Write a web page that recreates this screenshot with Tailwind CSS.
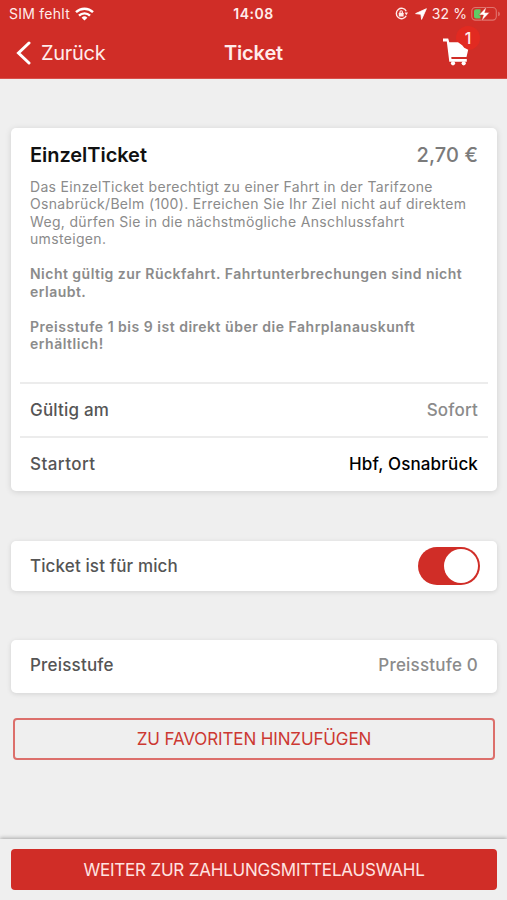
<!DOCTYPE html>
<html lang="de">
<head>
    <meta charset="UTF-8">
    <meta name="viewport" content="width=device-width, initial-scale=1.0">
    <title>Ticket</title>
    <script src="https://cdn.jsdelivr.net/npm/@tailwindcss/browser@4"></script>
</head>
<body class="bg-[#efefef] font-['Inter','Liberation_Sans',sans-serif]">
    <div class="flex flex-col h-[900px] overflow-hidden">
        <!-- Header -->
        <header class="h-[79px] shrink-0 bg-[#d02d27] text-[#ffeceb] border-b border-[#d8504b]">
            <!-- Status bar -->
            <div class="grid grid-cols-3 items-center h-[27px] text-[14px] leading-[27px]">
                <div class="flex items-center pl-[9px] gap-[5px] whitespace-nowrap">
                    <span class="tracking-[0.25px]">SIM fehlt</span>
                    <svg class="w-[19px] h-[14px]" viewBox="0 0 19 14" fill="none" stroke="#fff" stroke-width="2.4">
                        <path d="M1 5.2a12.2 12.2 0 0 1 17 0"/>
                        <path d="M4 8.6a7.8 7.8 0 0 1 11 0"/>
                        <path d="M9.5 13.5 6.6 10.7a4.2 4.2 0 0 1 5.8 0z" fill="#fff" stroke="none"/>
                    </svg>
                </div>
                <span class="text-center font-semibold tracking-[0.5px]">14:08</span>
                <div class="flex items-center justify-end pr-[6px] whitespace-nowrap">
                    <svg class="w-[13px] h-[13px] mr-[7px]" viewBox="0 0 13 13" fill="none" stroke="#ffeceb" stroke-width="1.4">
                        <path d="M11.2 4.2A5.2 5.2 0 1 0 11.2 8.8"/>
                        <path d="M9.6 5.4h3.4l-1.7 2.8z" fill="#ffeceb" stroke="none"/>
                        <rect x="3.8" y="5.7" width="4.8" height="3.7" rx=".5" fill="#ffeceb" stroke="none"/>
                        <path d="M5 6V4.9a1.2 1.2 0 0 1 2.4 0V6" stroke-width="1.1"/>
                    </svg>
                    <svg class="w-[12px] h-[12px] mr-[5px]" viewBox="0 0 12 12" fill="#fff" stroke="#fff" stroke-width=".8" stroke-linejoin="round">
                        <path d="M11.4.7.6 5.6l5.3.7.7 5.1z"/>
                    </svg>
                    <span class="tracking-[0.1px] mr-[4px]">32 %</span>
                    <svg class="w-[30px] h-[16px]" viewBox="0 0 30 16">
                        <rect x=".8" y="1.5" width="24.5" height="12.6" rx="3.6" fill="none" stroke="#e0746f" stroke-width="1.1"/>
                        <path d="M27.2 5.6v4.6q1.7-.6 1.7-2.3t-1.7-2.3z" fill="#e0746f"/>
                        <path d="M5 3.2h4.5v9.2H5a2 2 0 0 1-2-2V5.2a2 2 0 0 1 2-2z" fill="#5fcb65"/>
                        <path d="M15.6.8 7.8 9h4.6l-2 6.2L18.6 6.6h-4.8z" fill="#fff" stroke="#d02d27" stroke-width=".5"/>
                    </svg>
                </div>
            </div>
            <!-- Navigation bar -->
            <div class="grid grid-cols-3 items-center h-[51px] text-[20px] leading-[50px]">
                <div class="flex items-center pl-[16px] gap-[10px]">
                    <svg class="w-[15px] h-[24px]" viewBox="0 0 15 24" fill="none" stroke="#fff" stroke-width="3" stroke-linecap="round">
                        <path d="M13 2 2.5 12 13 22"/>
                    </svg>
                    <span class="tracking-[-0.3px]">Zurück</span>
                </div>
                <span class="text-center font-semibold tracking-[-0.15px]">Ticket</span>
                <div class="flex justify-end pr-[26px]">
                    <div class="relative w-[39px] h-[40px]">
                        <span class="absolute left-[14px] -top-[7px] w-[24px] h-[24px] rounded-full bg-[#e22a21]"></span>
                        <svg class="absolute left-[1px] top-[5px] w-[26px] h-[28px]" viewBox="0 0 26 28" fill="#fff">
                            <path d="M0 .4h5.2l1.1 3.8H15l4.2 3 2 2.600 4 1.900-1.700 7.300H8.300l.2 2h15.300v2.800H6.300L3.800 3.400H0z"/>
                            <circle cx="10" cy="25.300" r="2.100"/>
                            <circle cx="20.700" cy="25.300" r="2.100"/>
                        </svg>
                        <span class="absolute left-[14px] -top-[7px] w-[24px] text-center text-[16px] leading-[24px] font-medium">1</span>
                    </div>
                </div>
            </div>
        </header>

        <main class="grow px-[11px] pt-[49px] text-[17px] font-medium">
            <!-- Ticket details -->
            <section class="w-[486px] h-[363px] bg-white rounded-[5px] shadow-[0_1px_6px_rgba(0,0,0,0.13)] px-[9px]">
                <div class="h-[254px] px-[10px] pt-[13px]">
                    <div class="flex justify-between text-[20px] leading-[28px]">
                        <h1 class="font-semibold text-[#111] tracking-[-0.05px]">EinzelTicket</h1>
                        <span class="text-[#7b7b7b] tracking-[0.1px]">2,70 €</span>
                    </div>
                    <div class="mt-[9px] text-[14px] leading-[17.45px] text-[#8b8b8b] whitespace-nowrap">
                        <p class="font-normal tracking-[0.33px]">Das EinzelTicket berechtigt zu einer Fahrt in der Tarifzone<br>Osnabrück/Belm (100). Erreichen Sie Ihr Ziel nicht auf direktem<br>Weg, dürfen Sie in die nächstmögliche Anschlussfahrt<br>umsteigen.</p>
                        <p class="mt-[17.45px] font-semibold tracking-[0.48px]">Nicht gültig zur Rückfahrt. Fahrtunterbrechungen sind nicht<br>erlaubt.</p>
                        <p class="mt-[17.45px] font-semibold tracking-[0.51px]">Preisstufe 1 bis 9 ist direkt über die Fahrplanauskunft<br>erhältlich!</p>
                    </div>
                </div>
                <div class="flex items-center justify-between h-[54px] pt-[1px] px-[10px] border-t-2 border-[#ececec]">
                    <span class="text-[#555] tracking-[0.2px]">Gültig am</span>
                    <span class="text-[#8b8b8b] tracking-[0.2px]">Sofort</span>
                </div>
                <div class="flex items-center justify-between h-[54px] pt-[1px] px-[10px] border-t-2 border-[#ececec]">
                    <span class="text-[#555] tracking-[0.45px]">Startort</span>
                    <span class="text-[#000] tracking-[0.15px]">Hbf, Osnabrück</span>
                </div>
            </section>

            <!-- Own ticket switch -->
            <section class="flex items-center justify-between w-[486px] h-[50px] mt-[50px] pl-[19px] pr-[17px] bg-white rounded-[5px] shadow-[0_1px_5px_rgba(0,0,0,0.12)]">
                <span class="pt-[2px] text-[#555] tracking-[0.12px]">Ticket ist für mich</span>
                <button class="flex items-center justify-end w-[62px] h-[38px] pr-[2px] rounded-full bg-[#d02d27]">
                    <span class="w-[34px] h-[34px] rounded-full bg-white"></span>
                </button>
            </section>

            <!-- Price level -->
            <section class="flex items-center justify-between w-[486px] h-[53px] mt-[49px] pb-[1px] px-[19px] bg-white rounded-[5px] shadow-[0_1px_5px_rgba(0,0,0,0.12)]">
                <span class="text-[#555] tracking-[0.2px]">Preisstufe</span>
                <span class="text-[#8b8b8b] tracking-[0.2px]">Preisstufe 0</span>
            </section>

            <button class="block w-[482px] h-[42px] mt-[25px] ml-[2px] pt-[2px] border-2 border-[#dc6f6b] rounded-[4px] text-[#cc3832] font-normal tracking-[-0.13px]">ZU FAVORITEN HINZUFÜGEN</button>
        </main>

        <!-- Checkout -->
        <footer class="h-[61px] shrink-0 px-[11px] pt-[10px] bg-[#efefef] shadow-[0_-1px_4px_rgba(0,0,0,0.3)]">
            <button class="block w-[486px] h-[41px] pt-[2px] rounded-[4px] bg-[#d02d27] text-[17px] text-[#ffe3e1] tracking-[-0.2px]">WEITER ZUR ZAHLUNGSMITTELAUSWAHL</button>
        </footer>
    </div>
</body>
</html>
